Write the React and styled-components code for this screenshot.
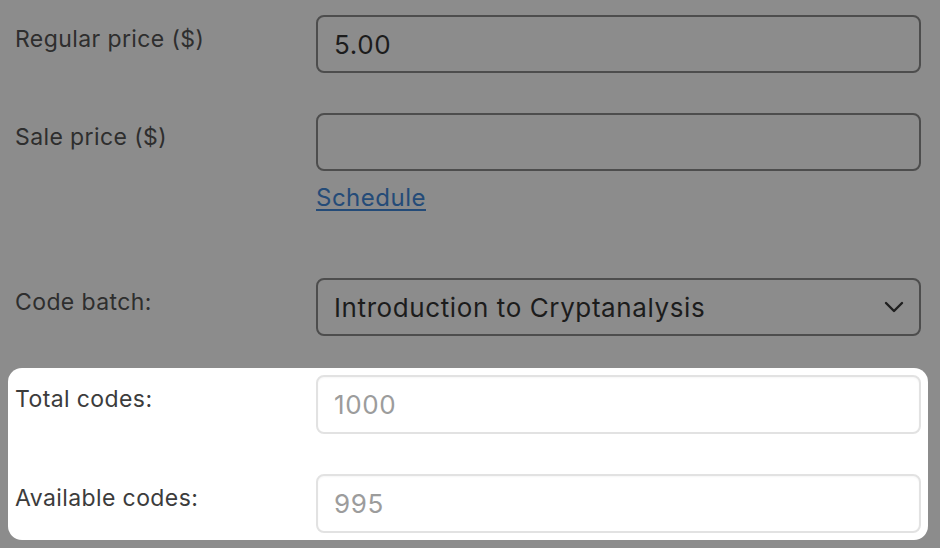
import React from "react";
import styled, { createGlobalStyle } from "styled-components";

const GlobalStyle = createGlobalStyle`
    html, body {
        margin: 0;
        padding: 0;
        background: #8c8c8c;
    }
    * {
        box-sizing: border-box;
    }
`;

const Page = styled.div`
    width: 940px;
    height: 548px;
    overflow: hidden;
    padding: 15px 19px 0 15px;
    font-family: Inter, "Noto Sans", sans-serif;
    color: #2e2e2e;
`;

const Row = styled.div`
    display: grid;
    grid-template-columns: 301px 605px;
    margin-bottom: ${(props) => props.$gap || 40}px;
`;

const Label = styled.label`
    font-size: 23px;
    letter-spacing: 0.4px;
    line-height: 30px;
    padding-top: ${(props) => props.$top || 9}px;
    color: ${(props) => (props.$light ? "#3c3c3c" : "#2e2e2e")};
`;

const Field = styled.div`
    display: flex;
    flex-direction: column;
`;

const Input = styled.div`
    height: 58px;
    border: 2px solid #4d4d4d;
    border-radius: 8px;
    padding: 0 16px;
    display: flex;
    align-items: center;
    font-size: 26px;
    letter-spacing: 0.6px;
    color: #1c1c1c;
`;

const ReadOnlyInput = styled(Input)`
    height: 59px;
    border: 2px solid #e2e2e2;
    box-shadow: inset 0 1px 2px rgba(0, 0, 0, 0.04);
    color: #9c9c9c;
`;

const Select = styled(Input)`
    justify-content: space-between;
    padding-right: 14px;
    svg {
        flex-shrink: 0;
    }
`;

const ScheduleLink = styled.a`
    margin-top: 10px;
    font-size: 24px;
    letter-spacing: 0.5px;
    line-height: 34px;
    color: #244b78;
    text-decoration: underline;
    text-underline-offset: 3px;
    align-self: flex-start;
`;

const Highlight = styled.div`
    margin-left: -7px;
    margin-right: -7px;
    padding: 7px;
    background: #ffffff;
    border-radius: 14px;
    ${Row}:last-child {
        margin-bottom: 0;
    }
`;

const Chevron = () => (
    <svg width="22" height="14" viewBox="0 0 22 14" fill="none">
        <path
            d="M3 3l8 8 8-8"
            stroke="#1f1f1f"
            strokeWidth="2.4"
            strokeLinecap="round"
            strokeLinejoin="round"
        />
    </svg>
);

const App = () => {
    return (
        <Page>
            <GlobalStyle />
            <Row>
                <Label $top={9}>Regular price ($)</Label>
                <Input>5.00</Input>
            </Row>
            <Row $gap={63}>
                <Label $top={9}>Sale price ($)</Label>
                <Field>
                    <Input />
                    <ScheduleLink href="#">Schedule</ScheduleLink>
                </Field>
            </Row>
            <Row $gap={32}>
                <Label $top={9}>Code batch:</Label>
                <Select>
                    Introduction to Cryptanalysis
                    <Chevron />
                </Select>
            </Row>
            <Highlight>
                <Row>
                    <Label $light $top={9}>Total codes:</Label>
                    <ReadOnlyInput>1000</ReadOnlyInput>
                </Row>
                <Row>
                    <Label $light $top={9}>Available codes:</Label>
                    <ReadOnlyInput>995</ReadOnlyInput>
                </Row>
            </Highlight>
        </Page>
    );
};

export default App;
